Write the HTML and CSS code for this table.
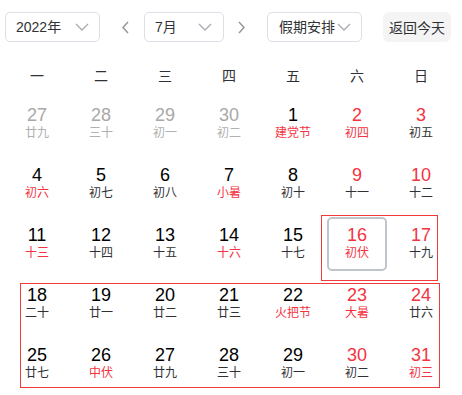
FILE: index.html
```html
<!DOCTYPE html>
<html lang="zh">
<head>
<meta charset="utf-8">
<link rel="stylesheet" href="styles.css">
</head>
<body>
<div class="cal">
  <div class="bar">
    <div class="select w-year"><span>2022年</span><svg class="chev" viewBox="0 0 14 8"><path d="M1 1l6 6 6-6"/></svg></div>
    <button class="arrow a-prev"><svg viewBox="0 0 7 13"><path d="M6 1L1 6.5 6 12"/></svg></button>
    <div class="select w-month"><span>7月</span><svg class="chev" viewBox="0 0 14 8"><path d="M1 1l6 6 6-6"/></svg></div>
    <button class="arrow a-next"><svg viewBox="0 0 7 13"><path d="M1 1l5 5.5L1 12"/></svg></button>
    <div class="select w-hol"><span>假期安排</span><svg class="chev" viewBox="0 0 14 8"><path d="M1 1l6 6 6-6"/></svg></div>
    <button class="today">返回今天</button>
  </div>

  <div class="week">
    <div>一</div><div>二</div><div>三</div><div>四</div><div>五</div><div>六</div><div>日</div>
  </div>

  <div class="grid">
    <div class="cell other"><div class="in"><b>27</b><i>廿九</i></div></div>
    <div class="cell other"><div class="in"><b>28</b><i>三十</i></div></div>
    <div class="cell other"><div class="in"><b>29</b><i>初一</i></div></div>
    <div class="cell other"><div class="in"><b>30</b><i>初二</i></div></div>
    <div class="cell"><div class="in"><b>1</b><i class="r">建党节</i></div></div>
    <div class="cell we"><div class="in"><b>2</b><i class="r">初四</i></div></div>
    <div class="cell we"><div class="in"><b>3</b><i>初五</i></div></div>

    <div class="cell"><div class="in"><b>4</b><i class="r">初六</i></div></div>
    <div class="cell"><div class="in"><b>5</b><i>初七</i></div></div>
    <div class="cell"><div class="in"><b>6</b><i>初八</i></div></div>
    <div class="cell"><div class="in"><b>7</b><i class="r">小暑</i></div></div>
    <div class="cell"><div class="in"><b>8</b><i>初十</i></div></div>
    <div class="cell we"><div class="in"><b>9</b><i>十一</i></div></div>
    <div class="cell we"><div class="in"><b>10</b><i>十二</i></div></div>

    <div class="cell"><div class="in"><b>11</b><i class="r">十三</i></div></div>
    <div class="cell"><div class="in"><b>12</b><i>十四</i></div></div>
    <div class="cell"><div class="in"><b>13</b><i>十五</i></div></div>
    <div class="cell"><div class="in"><b>14</b><i class="r">十六</i></div></div>
    <div class="cell"><div class="in"><b>15</b><i>十七</i></div></div>
    <div class="cell we"><div class="in sel"><b>16</b><i class="r">初伏</i></div></div>
    <div class="cell we"><div class="in"><b>17</b><i>十九</i></div></div>

    <div class="cell"><div class="in"><b>18</b><i>二十</i></div></div>
    <div class="cell"><div class="in"><b>19</b><i>廿一</i></div></div>
    <div class="cell"><div class="in"><b>20</b><i>廿二</i></div></div>
    <div class="cell"><div class="in"><b>21</b><i>廿三</i></div></div>
    <div class="cell"><div class="in"><b>22</b><i class="r">火把节</i></div></div>
    <div class="cell we"><div class="in"><b>23</b><i class="r">大暑</i></div></div>
    <div class="cell we"><div class="in"><b>24</b><i>廿六</i></div></div>

    <div class="cell"><div class="in"><b>25</b><i>廿七</i></div></div>
    <div class="cell"><div class="in"><b>26</b><i class="r">中伏</i></div></div>
    <div class="cell"><div class="in"><b>27</b><i>廿九</i></div></div>
    <div class="cell"><div class="in"><b>28</b><i>三十</i></div></div>
    <div class="cell"><div class="in"><b>29</b><i>初一</i></div></div>
    <div class="cell we"><div class="in"><b>30</b><i>初二</i></div></div>
    <div class="cell we"><div class="in"><b>31</b><i class="r">初三</i></div></div>

    <div class="mark mark-1"></div>
    <div class="mark mark-2"></div>
  </div>
</div>
</body>
</html>
```

FILE: styles.css
```css
* { box-sizing: border-box; }
html, body { margin: 0; padding: 0; background: #fff; }
body {
  font-family: "Liberation Sans", "Noto Sans CJK SC", sans-serif;
  color: #303133;
}
.cal { padding: 12px 0 0 5px; width: 462px; }

.bar { display: flex; align-items: center; height: 30px; }
.select {
  height: 30px;
  border: 1px solid #dcdfe6;
  border-radius: 5px;
  display: flex;
  align-items: center;
  justify-content: space-between;
  padding: 0 10px 0 10px;
  font-size: 14px;
  color: #303133;
  background: #fff;
}
.select span { line-height: 1; }
.chev { width: 14px; height: 8px; }
.chev path { fill: none; stroke: #a8abb2; stroke-width: 1.3; }
.w-year { width: 95px; }
.w-month { width: 80px; margin-left: 9px; padding-right: 11px; }
.w-hol { width: 95px; margin-left: 16px; padding-left: 11px; }
.arrow {
  border: 0; background: none; padding: 0;
  width: 20px; height: 30px;
  display: flex; align-items: center; justify-content: center;
}
.arrow svg { width: 7px; height: 13px; }
.arrow path { fill: none; stroke: #909399; stroke-width: 1.4; }
.a-prev { margin-left: 15px; }
.a-next { margin-left: 7px; }
.today {
  margin-left: 21px;
  height: 30px;
  width: 68px;
  border: 0;
  border-radius: 6px;
  background: #f4f4f5;
  font-family: inherit;
  font-size: 14px;
  color: #303133;
  padding: 0;
}

.week {
  display: grid;
  grid-template-columns: repeat(7, 64px);
  margin-top: 14px;
  height: 38px;
  align-items: center;
  font-size: 14px;
  color: #303133;
  text-align: center;
}

.grid {
  position: relative;
  display: grid;
  grid-template-columns: repeat(7, 64px);
  grid-auto-rows: 60px;
}
.cell { display: flex; align-items: center; justify-content: center; }
.in {
  width: 60px; height: 54px;
  border: 2px solid transparent;
  border-radius: 5px;
  display: flex; flex-direction: column; align-items: center; justify-content: center;
  padding-bottom: 1px;
}
.in b { font-weight: normal; font-size: 18px; line-height: 20px; color: #000; }
.in i { font-style: normal; font-size: 12px; line-height: 17px; color: #303133; }
.in i.r { color: #f5333f; }
.we .in b { color: #f5333f; }
.other .in b { color: #a8a8a8; }
.other .in i { color: #b0b0b0; }
.sel { border-color: #c0c4cc; }

.mark { position: absolute; border: 1px solid #f23a3a; pointer-events: none; }
.mark-1 { left: 316px; top: 121px; width: 117px; height: 66px; }
.mark-2 { left: 15px; top: 189px; width: 420px; height: 105px; }
```
